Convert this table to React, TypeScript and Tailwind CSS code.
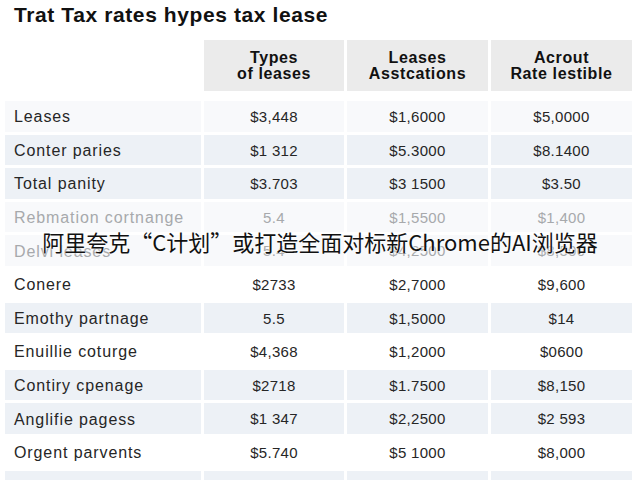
const rows = [
  { name: "Leases", a: "$3,448", b: "$1,6000", c: "$5,0000", tone: "faint" },
  { name: "Conter paries", a: "$1 312", b: "$5.3000", c: "$8.1400", tone: "shade" },
  { name: "Total panity", a: "$3.703", b: "$3 1500", c: "$3.50", tone: "shade" },
  { name: "Rebmation cortnange", a: "5.4", b: "$1,5500", c: "$1,400", tone: "muted" },
  { name: "Delvi leases", a: "5.4", b: "$4,2500", c: "$8,500", tone: "muted" },
  { name: "Conere", a: "$2733", b: "$2,7000", c: "$9,600", tone: "plain" },
  { name: "Emothy partnage", a: "5.5", b: "$1,5000", c: "$14", tone: "shade" },
  { name: "Enuillie coturge", a: "$4,368", b: "$1,2000", c: "$0600", tone: "plain" },
  { name: "Contiry cpenage", a: "$2718", b: "$1.7500", c: "$8,150", tone: "shade" },
  { name: "Anglifie pagess", a: "$1 347", b: "$2,2500", c: "$2 593", tone: "shade" },
  { name: "Orgent parvents", a: "$5.740", b: "$5 1000", c: "$8,000", tone: "plain" },
  { name: "", a: "", b: "", c: "", tone: "shade" },
];

const headers = [
  ["Types", "of leases"],
  ["Leases", "Asstcations"],
  ["Acrout", "Rate lestible"],
];

// background per row tone
const cellBg = (tone: string) => {
  if (tone === "shade") return "bg-[#edf1f6]";
  if (tone === "faint" || tone === "muted") return "bg-[#f8f9fb]";
  return "bg-white";
};

export default function App() {
  return (
    <div
      className="relative w-[640px] h-[480px] overflow-hidden bg-white"
      style={{ fontFamily: '"Liberation Sans", Arial, sans-serif' }}
    >
      <h1 className="pl-[14px] pt-[3px] text-[21px] leading-[24px] font-bold text-[#111] tracking-[0.6px]">
        Trat Tax rates hypes tax lease
      </h1>

      <div className="ml-[5px] mt-[13px] w-[630px]">
        {/* Header */}
        <div className="grid grid-cols-[196px_140px_141px_141px] gap-x-[3px]">
          <div />
          {headers.map((h) => (
            <div
              key={h[0]}
              className="h-[51px] bg-[#ebebeb] flex flex-col items-center justify-center text-[16px] leading-[16px] font-bold text-[#111] tracking-[0.6px]"
            >
              <span>{h[0]}</span>
              <span>{h[1]}</span>
            </div>
          ))}
        </div>

        {/* Body */}
        <div className="mt-[10px] grid grid-cols-[196px_140px_141px_141px] gap-x-[3px] gap-y-[3px]">
          {rows.map((r, i) => {
            const bg = cellBg(r.tone);
            const txt = r.tone === "muted" ? "text-[#a7a9ac]" : "text-[#262626]";
            return [
              <div
                key={`n${i}`}
                className={`h-[30.6px] flex items-center pl-[9px] pt-[2px] text-[16px] tracking-[0.9px] ${bg} ${txt}`}
              >
                {r.name}
              </div>,
              ...[r.a, r.b, r.c].map((v, j) => (
                <div
                  key={`v${i}-${j}`}
                  className={`h-[30.6px] flex items-center justify-center pt-[2px] text-[15px] tracking-[0.3px] ${bg} ${txt}`}
                >
                  {v}
                </div>
              )),
            ];
          })}
        </div>
      </div>

      {/* Caption overlay */}
      <div
        className="absolute left-0 right-0 top-[226px] text-center text-[22px] leading-[30px] text-[#111] whitespace-nowrap"
        style={{
          fontFamily: '"Noto Sans CJK SC", "Noto Sans", sans-serif',
          textShadow: "0 0 2px #fff, 0 0 2px #fff",
        }}
      >
        阿里夸克“C计划”或打造全面对标新Chrome的AI浏览器
      </div>
    </div>
  );
}
